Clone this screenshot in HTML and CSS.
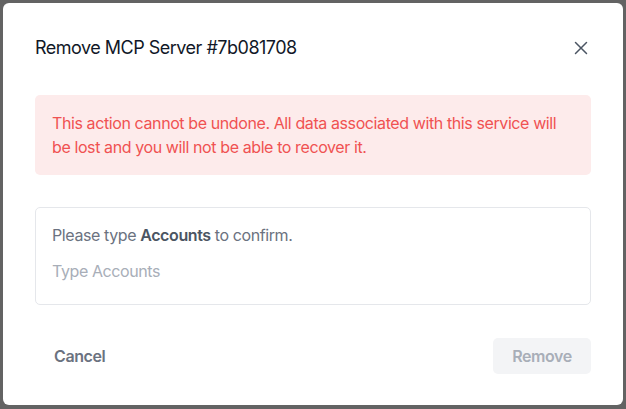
FILE: index.html
```html
<!DOCTYPE html>
<html lang="en">
<head>
<meta charset="utf-8">
<title>Remove MCP Server</title>
<link rel="stylesheet" href="styles.css">
</head>
<body>
<div class="dialog">
  <div class="header">
    <h2 class="title">Remove MCP Server #7b081708</h2>
    <button class="close" aria-label="Close">
      <svg width="14" height="14" viewBox="0 0 14 14"><path d="M1.5 1.5 L12.5 12.5 M12.5 1.5 L1.5 12.5" stroke="#4b5563" stroke-width="1.5" stroke-linecap="round" fill="none"/></svg>
    </button>
  </div>
  <div class="alert">This action cannot be undone. All data associated with this service will be lost and you will not be able to recover it.</div>
  <div class="confirm">
    <div class="label">Please type <b>Accounts</b> to confirm.</div>
    <input class="field" type="text" placeholder="Type Accounts">
  </div>
  <div class="footer">
    <button class="btn cancel">Cancel</button>
    <button class="btn remove" disabled>Remove</button>
  </div>
</div>
</body>
</html>
```
FILE: styles.css
```css
html, body { margin: 0; padding: 0; }
body {
  background: #636363;
  width: 626px;
  height: 409px;
  padding: 3px;
  box-sizing: border-box;
  font-family: Inter, "Noto Sans", sans-serif;
  letter-spacing: -0.025em;
  -webkit-font-smoothing: antialiased;
}
.dialog {
  width: 620px;
  height: 402px;
  box-sizing: border-box;
  background: #fff;
  border-radius: 6px;
  padding: 32px 32px 0 32px;
  display: flex;
  flex-direction: column;
}
.header {
  display: flex;
  align-items: center;
  justify-content: space-between;
  height: 26px;
}
.title {
  margin: 0;
  font-size: 18px;
  font-weight: 400;
  line-height: 26px;
  color: #111827;
  letter-spacing: -0.028em;
}
.close {
  border: 0;
  background: none;
  padding: 0;
  width: 14px;
  height: 14px;
  margin-right: 3px;
  display: flex;
}
.alert {
  margin-top: 34px;
  background: #fdebeb;
  color: #f05252;
  border-radius: 5px;
  padding: 16px 17px;
  font-size: 16px;
  line-height: 24px;
  height: 80px;
  box-sizing: border-box;
}
.confirm {
  margin-top: 32px;
  border: 1px solid #e5e7eb;
  border-radius: 5px;
  padding: 15px 16px 15px 16px;
  height: 98px;
  box-sizing: border-box;
}
.label {
  font-size: 16px;
  line-height: 24px;
  color: #6b7280;
}
.label b { color: #4b5563; font-weight: 600; }
.field {
  display: block;
  width: 100%;
  margin-top: 6px;
  height: 36px;
  border: 0;
  outline: none;
  padding: 0;
  font-family: inherit;
  font-size: 16px;
  letter-spacing: inherit;
  color: #374151;
  background: transparent;
}
.field::placeholder { color: #a8aeb8; }
.footer {
  margin-top: 33px;
  display: flex;
  justify-content: space-between;
  align-items: center;
}
.btn {
  font-family: inherit;
  font-size: 16px;
  font-weight: 600;
  letter-spacing: inherit;
  height: 36px;
  border: 0;
  border-radius: 5px;
  background: none;
}
.cancel {
  color: #6b7280;
  padding: 0 19px;
}
.remove {
  width: 98px;
  background: #f3f4f6;
  color: #a8aeb8;
  padding: 0;
}
```
